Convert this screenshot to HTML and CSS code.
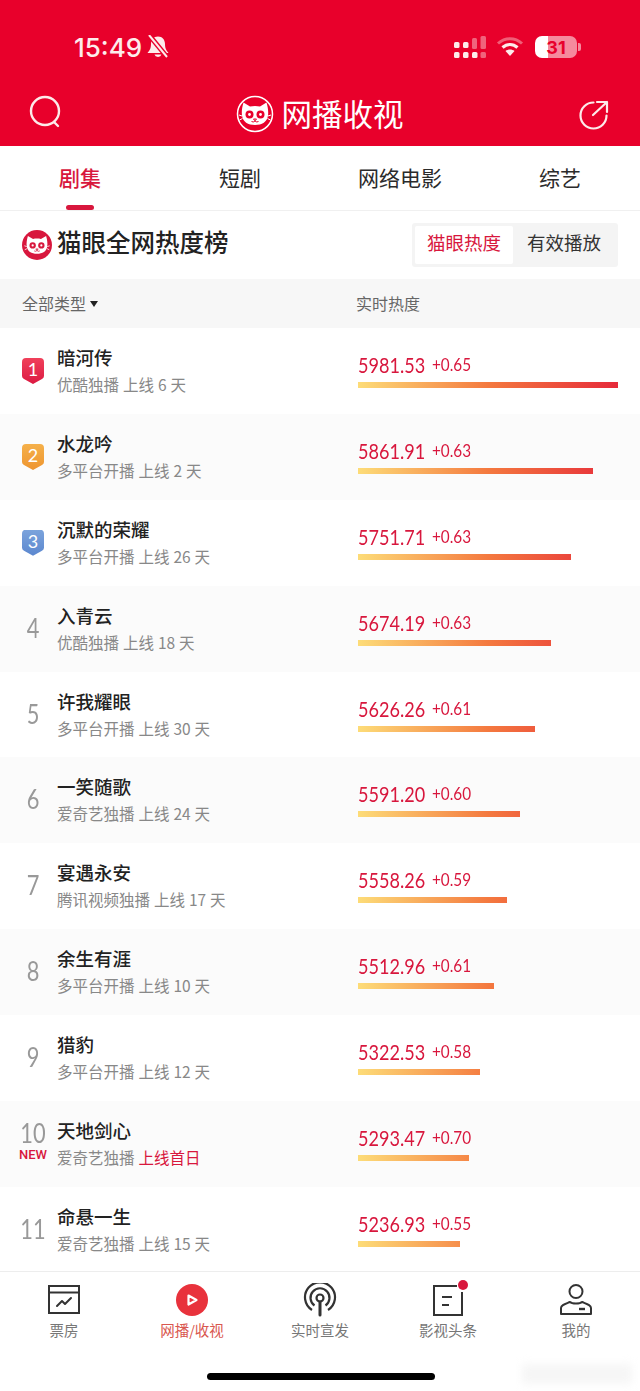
FILE: index.html
```html
<!DOCTYPE html>
<html lang="zh-CN">
<head>
  <meta charset="UTF-8" />
  <meta name="viewport" content="width=device-width, initial-scale=1.0"/>
  <title>网播收视</title>
  <link rel="stylesheet" href="styles.css">
</head>
<body>
  <!-- Red header -->
  <header class="top">
    <div class="status">
      <div class="status-left">
        <span class="clock">15:49</span>
        <svg class="bell" width="24" height="24" viewBox="0 0 24 24">
          <path d="M12 1.500c-4.500 0-7 3.500-7 7.500 0 4.500-1.500 6.500-3.500 9h21c-2-2.500-3.500-4.500-3.500-9 0-4-2.500-7.500-7-7.500z" fill="#fdecec"/>
          <path d="M8.500 19.500a3.600 3.200 0 0 0 7 0z" fill="#fdecec"/>
          <path d="M3 0l18 22" stroke="#e8002b" stroke-width="5"/>
          <path d="M3 0l18 22" stroke="#fdecec" stroke-width="2"/>
        </svg>
      </div>
      <div class="status-right">
        <svg width="32" height="24" viewBox="0 0 32 24">
          <g fill="#fdecec">
            <rect x="0" y="7" width="5.500" height="6" rx="1.500"/>
            <rect x="0" y="17" width="5.500" height="6" rx="1.500"/>
            <rect x="9" y="7" width="5.500" height="6" rx="1.500"/>
            <rect x="9" y="17" width="5.500" height="6" rx="1.500"/>
            <rect x="18" y="17" width="5.500" height="6" rx="1.500"/>
          </g>
          <g fill="#fdecec" opacity=".42">
            <rect x="18" y="3" width="5" height="11" rx="1.500"/>
            <rect x="26.500" y="1" width="5.500" height="13" rx="1.500"/>
            <rect x="26.500" y="17" width="5.500" height="6" rx="1.500"/>
          </g>
        </svg>
        <svg class="wifi" width="28" height="22" viewBox="0 0 28 22">
          <path d="M2 7.500C9 1 19 1 26 7.500" fill="none" stroke="#fdecec" stroke-opacity=".4" stroke-width="3"/>
          <path d="M6.500 11.500c4.500-4 10.500-4 15 0" fill="none" stroke="#fdecec" stroke-width="3.200"/>
          <path d="M14 20l-4.500-5c2.500-2 6.500-2 9 0z" fill="#fdecec"/>
        </svg>
        <div class="battery"><span class="battery-num">31</span></div>
        <span class="battery-cap"></span>
      </div>
    </div>
    <div class="navbar">
      <svg class="nav-icon" width="36" height="36" viewBox="0 0 36 36">
        <circle cx="17" cy="16" r="14" fill="none" stroke="#fdeaea" stroke-width="2.400"/>
        <path d="M26 27l4 4" stroke="#fdeaea" stroke-width="2.400" stroke-linecap="round"/>
      </svg>
      <div class="brand">
        <svg class="logo logo-top" width="38" height="38" viewBox="0 0 38 38">
          <circle cx="19" cy="19" r="17.500" fill="none" stroke="#fff" stroke-width="1.500"/>
          <use href="#cat"/>
        </svg>
        <span class="brand-name">网播收视</span>
      </div>
      <svg class="nav-icon" width="36" height="36" viewBox="0 0 36 36">
        <path d="M18.500 7.500A13 13 0 1 0 31.500 20.500" fill="none" stroke="#fdeaea" stroke-width="2.200" stroke-linecap="round"/>
        <path d="M18 20L32 7M22 7H32V17" fill="none" stroke="#fdeaea" stroke-width="2.200" stroke-linecap="round" stroke-linejoin="round"/>
      </svg>
    </div>
  </header>

  <!-- Tabs -->
  <nav class="tabs">
    <div class="tab active">剧集</div>
    <div class="tab">短剧</div>
    <div class="tab">网络电影</div>
    <div class="tab">综艺</div>
  </nav>

  <!-- Title -->
  <section class="board-head">
    <div class="board-title">
      <svg class="logo logo-small" width="30" height="30" viewBox="0 0 38 38">
        <circle cx="19" cy="19" r="19" fill="#d8173d"/>
        <use href="#cat"/>
      </svg>
      <h2>猫眼全网热度榜</h2>
    </div>
    <div class="switch">
      <span class="switch-item on">猫眼热度</span>
      <span class="switch-item">有效播放</span>
    </div>
  </section>

  <div class="col-head">
    <div class="col-type">全部类型<i class="caret"></i></div>
    <div class="col-heat">实时热度</div>
  </div>

  <!-- Ranking -->
  <main class="list">
    <div class="row">
      <div class="rank"><span class="badge gold-red">1</span></div>
      <div class="info"><div class="name">暗河传</div><div class="meta">优酷独播 上线 6 天</div></div>
      <div class="heat"><div class="nums"><span class="num">5981.53</span><span class="delta">+0.65</span></div><div class="bar" style="width:260px"></div></div>
    </div>
    <div class="row">
      <div class="rank"><span class="badge orange">2</span></div>
      <div class="info"><div class="name">水龙吟</div><div class="meta">多平台开播 上线 2 天</div></div>
      <div class="heat"><div class="nums"><span class="num">5861.91</span><span class="delta">+0.63</span></div><div class="bar" style="width:235px"></div></div>
    </div>
    <div class="row">
      <div class="rank"><span class="badge blue">3</span></div>
      <div class="info"><div class="name">沉默的荣耀</div><div class="meta">多平台开播 上线 26 天</div></div>
      <div class="heat"><div class="nums"><span class="num">5751.71</span><span class="delta">+0.63</span></div><div class="bar" style="width:213px"></div></div>
    </div>
    <div class="row">
      <div class="rank"><span class="rank-num">4</span></div>
      <div class="info"><div class="name">入青云</div><div class="meta">优酷独播 上线 18 天</div></div>
      <div class="heat"><div class="nums"><span class="num">5674.19</span><span class="delta">+0.63</span></div><div class="bar" style="width:193px"></div></div>
    </div>
    <div class="row">
      <div class="rank"><span class="rank-num">5</span></div>
      <div class="info"><div class="name">许我耀眼</div><div class="meta">多平台开播 上线 30 天</div></div>
      <div class="heat"><div class="nums"><span class="num">5626.26</span><span class="delta">+0.61</span></div><div class="bar" style="width:177px"></div></div>
    </div>
    <div class="row">
      <div class="rank"><span class="rank-num">6</span></div>
      <div class="info"><div class="name">一笑随歌</div><div class="meta">爱奇艺独播 上线 24 天</div></div>
      <div class="heat"><div class="nums"><span class="num">5591.20</span><span class="delta">+0.60</span></div><div class="bar" style="width:162px"></div></div>
    </div>
    <div class="row">
      <div class="rank"><span class="rank-num">7</span></div>
      <div class="info"><div class="name">宴遇永安</div><div class="meta">腾讯视频独播 上线 17 天</div></div>
      <div class="heat"><div class="nums"><span class="num">5558.26</span><span class="delta">+0.59</span></div><div class="bar" style="width:149px"></div></div>
    </div>
    <div class="row">
      <div class="rank"><span class="rank-num">8</span></div>
      <div class="info"><div class="name">余生有涯</div><div class="meta">多平台开播 上线 10 天</div></div>
      <div class="heat"><div class="nums"><span class="num">5512.96</span><span class="delta">+0.61</span></div><div class="bar" style="width:136px"></div></div>
    </div>
    <div class="row">
      <div class="rank"><span class="rank-num">9</span></div>
      <div class="info"><div class="name">猎豹</div><div class="meta">多平台开播 上线 12 天</div></div>
      <div class="heat"><div class="nums"><span class="num">5322.53</span><span class="delta">+0.58</span></div><div class="bar" style="width:122px"></div></div>
    </div>
    <div class="row">
      <div class="rank rank-new"><span class="rank-num">10</span><span class="new">NEW</span></div>
      <div class="info"><div class="name">天地剑心</div><div class="meta">爱奇艺独播 <em>上线首日</em></div></div>
      <div class="heat"><div class="nums"><span class="num">5293.47</span><span class="delta">+0.70</span></div><div class="bar" style="width:111px"></div></div>
    </div>
    <div class="row">
      <div class="rank"><span class="rank-num">11</span></div>
      <div class="info"><div class="name">命悬一生</div><div class="meta">爱奇艺独播 上线 15 天</div></div>
      <div class="heat"><div class="nums"><span class="num">5236.93</span><span class="delta">+0.55</span></div><div class="bar" style="width:102px"></div></div>
    </div>
  </main>

  <!-- Bottom bar -->
  <footer class="tabbar">
    <div class="tabbar-items">
      <div class="bar-item">
        <svg width="34" height="34" viewBox="0 0 34 34" fill="none" stroke="#333" stroke-width="2">
          <rect x="2" y="3" width="30" height="27"/>
          <path d="M2 9.500h30"/>
          <path d="M10 23l5-5 3 3 6-6" stroke-linecap="round" stroke-linejoin="round"/>
        </svg>
        <span>票房</span>
      </div>
      <div class="bar-item current">
        <svg width="34" height="34" viewBox="0 0 34 34">
          <circle cx="17" cy="17" r="16" fill="#e8323c"/>
          <path d="M13.500 12.500l8 4.500-8 4.500z" fill="none" stroke="#fff" stroke-width="2.200" stroke-linejoin="round"/>
        </svg>
        <span>网播/收视</span>
      </div>
      <div class="bar-item">
        <svg width="34" height="34" viewBox="0 0 34 34" fill="none" stroke="#333" stroke-width="2.200">
          <path d="M9 27A15 15 0 1 1 25 27"/>
          <path d="M11.500 22.500a9.500 9.500 0 1 1 11 0"/>
          <circle cx="17" cy="15" r="3.500"/>
          <path d="M17 19v13" stroke-width="3" stroke-linecap="round"/>
        </svg>
        <span>实时宣发</span>
      </div>
      <div class="bar-item has-dot">
        <svg width="34" height="34" viewBox="0 0 34 34" fill="none" stroke="#333" stroke-width="2">
          <path d="M26 3H3v29h28V9"/>
          <path d="M11 14h10M11 22h7" stroke-width="2.200"/>
        </svg>
        <i class="dot"></i>
        <span>影视头条</span>
      </div>
      <div class="bar-item">
        <svg width="34" height="34" viewBox="0 0 34 34" fill="none" stroke="#333" stroke-width="2">
          <circle cx="17" cy="8.500" r="6.500"/>
          <path d="M2 31v-6c0-3 4-4 9-6 2 2 10 2 12 0 5 2 9 3 9 6v6z" stroke-linejoin="round"/>
          <path d="M20 26h6" stroke-width="2.400"/>
        </svg>
        <span>我的</span>
      </div>
    </div>
    <div class="home-bar"></div>
    <div class="smudge"></div>
  </footer>

  <!-- shared cat head, eyes follow the colour of the logo it sits in -->
  <svg width="0" height="0" class="defs">
    <symbol id="cat" viewBox="0 0 38 38">
      <path d="M7.500 7.500L14 11.500c3-.8 7-.8 10 0l6.500-4c1.500 5 2 9 1.500 13-.8 6.500-6 9.500-13 9.500S6.800 27 6 20.500c-.5-4 0-8 1.500-13z" fill="#fff"/>
      <path d="M3 20l3 1M3.500 25l3-1.500M35 20l-3 1M34.500 25l-3-1.500" stroke="#fff" stroke-width="1"/>
      <circle cx="13.500" cy="19.500" r="4" fill="currentColor"/>
      <circle cx="24.500" cy="19.500" r="4" fill="currentColor"/>
      <circle cx="13.500" cy="19.500" r="1.400" fill="#fff"/>
      <circle cx="24.500" cy="19.500" r="1.400" fill="#fff"/>
      <path d="M17.500 24h3l-1.500 1.800zM15.500 26.500q1.800 1.200 3.500-.5 1.700 1.700 3.500.5" fill="none" stroke="currentColor" stroke-width="1"/>
    </symbol>
  </svg>
</body>
</html>
```

FILE: styles.css
```css
* {
  box-sizing: border-box;
}

html, body {
  margin: 0;
  height: 1391px;
  overflow: hidden;
}

body {
  width: 640px;
  display: flex;
  flex-direction: column;
  background: #fff;
  font-family: "Noto Sans CJK SC", "Noto Sans", sans-serif;
  color: #222;
}

/* header */
.top {
  height: 146px;
  background: #e8002b;
  color: #fff;
  flex: none;
}

.status {
  height: 90px;
  display: flex;
  justify-content: space-between;
  padding: 33px 59px 0 74px;
}

.status-left, .status-right {
  display: flex;
  align-items: center;
  height: 28px;
}

.clock {
  font-family: Inter, sans-serif;
  font-size: 26px;
  font-weight: 500;
  color: #fdecec;
}

.bell {
  margin-left: 4px;
}

.wifi {
  margin: 0 11px 0 10px;
}

.battery {
  width: 42px;
  height: 22px;
  border-radius: 7px;
  background: linear-gradient(to right, #fff 0 30%, #f58a9d 30% 100%);
  display: flex;
  align-items: center;
  justify-content: center;
}

.battery-num {
  font-family: Inter, sans-serif;
  font-size: 18px;
  font-weight: 700;
  color: #e8002b;
}

.battery-cap {
  width: 3px;
  height: 8px;
  margin-left: 1px;
  border-radius: 0 2px 2px 0;
  background: #f58a9d;
}

.navbar {
  display: flex;
  align-items: center;
  justify-content: space-between;
  padding: 0 29px 0 28px;
  height: 46px;
}

.brand {
  display: flex;
  align-items: center;
  gap: 8px;
}

.logo {
  flex: none;
}

.logo-top {
  color: #e8002b;
  margin-top: 2px;
}

.logo-small {
  color: #d8173d;
}

.brand-name {
  font-size: 30.500px;
  font-weight: 400;
  line-height: 38px;
}

/* tabs */
.tabs {
  height: 65px;
  display: grid;
  grid-template-columns: repeat(4, 160px);
  border-bottom: 1px solid #f0f0f0;
  flex: none;
}

.tab {
  text-align: center;
  font-size: 21px;
  line-height: 63px;
  height: 64px;
  color: #2b2b2b;
  position: relative;
}

.tab.active {
  color: #d8173d;
  font-weight: 500;
}

.tab.active::after {
  content: "";
  position: absolute;
  left: 66px;
  bottom: 0;
  width: 28px;
  height: 5px;
  border-radius: 3px;
  background: #d8173d;
}

/* board title */
.board-head {
  height: 68px;
  flex: none;
  display: flex;
  align-items: center;
  justify-content: space-between;
  padding: 0 22px;
}

.board-title {
  display: flex;
  align-items: center;
  gap: 5px;
}

.board-title h2 {
  margin: 0;
  height: 34px;
  font-size: 24.500px;
  font-weight: 500;
  line-height: 28px;
  color: #222;
}

.switch {
  width: 206px;
  height: 44px;
  padding: 3px;
  display: flex;
  background: #f4f4f4;
  border-radius: 3px;
}

.switch-item {
  flex: 1;
  text-align: center;
  font-size: 18.500px;
  line-height: 33px;
  color: #333;
}

.switch-item.on {
  flex: none;
  width: 98px;
  background: #fff;
  border-radius: 2px;
  color: #d8173d;
}

.col-head {
  height: 49px;
  flex: none;
  display: flex;
  align-items: center;
  padding-bottom: 2px;
  background: #f7f7f7;
  font-size: 16px;
  color: #666;
}

.col-type {
  width: 356px;
  padding-left: 22px;
  display: flex;
  align-items: center;
}

.caret {
  width: 0;
  height: 0;
  margin: 2px 0 0 4px;
  border: 4.500px solid transparent;
  border-top: 6px solid #222;
  border-bottom: 0;
}

/* rows */
.list {
  flex: 1;
  overflow: hidden;
}

.row {
  height: 85.900px;
  display: flex;
}

.row:nth-child(even) {
  background: #fbfbfb;
}

.rank {
  width: 46px;
  margin: 0 1px 0 10px;
  padding-top: 27px;
  text-align: center;
  font-family: Lato, sans-serif;
  font-size: 26px;
  line-height: 30px;
  color: #999;
}

.rank-num {
  display: block;
  transform: scaleX(.84);
}

.rank-new {
  padding-top: 18px;
  line-height: 28px;
}

.new {
  display: block;
  font-family: Roboto, sans-serif;
  font-size: 13px;
  font-weight: 500;
  line-height: 16px;
  color: #d8173d;
}

.badge {
  display: block;
  width: 22px;
  height: 26px;
  margin: 3px 0 0 12px;
  clip-path: path("M4 0H18a4 4 0 0 1 4 4V18q0 2-2 3L11 26 2 21q-2-1-2-3V4a4 4 0 0 1 4-4z");
  font-family: Lato, sans-serif;
  font-size: 18px;
  line-height: 23px;
  color: #fff;
}

.gold-red {
  background: linear-gradient(#f0405a, #dc1a42);
}

.orange {
  background: linear-gradient(#f5b04a, #ee9530);
}

.blue {
  background: linear-gradient(#7ba3dc, #5b87cf);
}

.info {
  width: 301px;
  padding-top: 16px;
}

.name {
  font-size: 18.500px;
  font-weight: 500;
  line-height: 27px;
  color: #222;
}

.meta {
  margin-top: 1px;
  font-size: 15.500px;
  line-height: 24px;
  word-spacing: .5px;
  color: #888;
}

.meta em {
  font-style: normal;
  color: #d8173d;
}

.heat {
  width: 260px;
  padding-top: 24px;
}

.nums {
  height: 26px;
  display: flex;
  align-items: center;
  color: #d8173d;
  line-height: 26px;
  font-family: Lato, sans-serif;
}

.num {
  width: 74px;
  font-size: 21px;
  transform: scaleX(.86);
  transform-origin: left center;
}

.delta {
  font-size: 17px;
  transform: scaleX(.9);
  transform-origin: left center;
}

/* gradient runs over the full track, short bars stop at orange */
.bar {
  height: 6px;
  margin-top: 4px;
  background: linear-gradient(to right, #fddc78, #f4793f 50%, #e62a3a) left top / 260px 100% no-repeat;
}

/* bottom bar */
.tabbar {
  height: 120px;
  flex: none;
  background: #fff;
  border-top: 1px solid #ededed;
  position: relative;
}

.tabbar-items {
  display: grid;
  grid-template-columns: repeat(5, 128px);
  padding-top: 11px;
}

.bar-item {
  display: flex;
  flex-direction: column;
  align-items: center;
  position: relative;
  font-size: 14.500px;
  line-height: 20px;
  color: #777;
}

.bar-item span {
  margin-top: 3px;
}

.bar-item.current {
  color: #d9574f;
}

.dot {
  position: absolute;
  top: -3px;
  left: 74px;
  width: 10px;
  height: 10px;
  border-radius: 50%;
  background: #d8173d;
}

.home-bar {
  width: 228px;
  height: 7px;
  margin: 33px auto 0;
  position: relative;
  left: 1px;
  border-radius: 4px;
  background: #000;
}

/* faint blurred patch in the corner of the capture */
.smudge {
  position: absolute;
  right: 8px;
  top: 92px;
  width: 110px;
  height: 20px;
  background: #f6f6f6;
  filter: blur(4px);
}

.defs {
  position: absolute;
}
```
